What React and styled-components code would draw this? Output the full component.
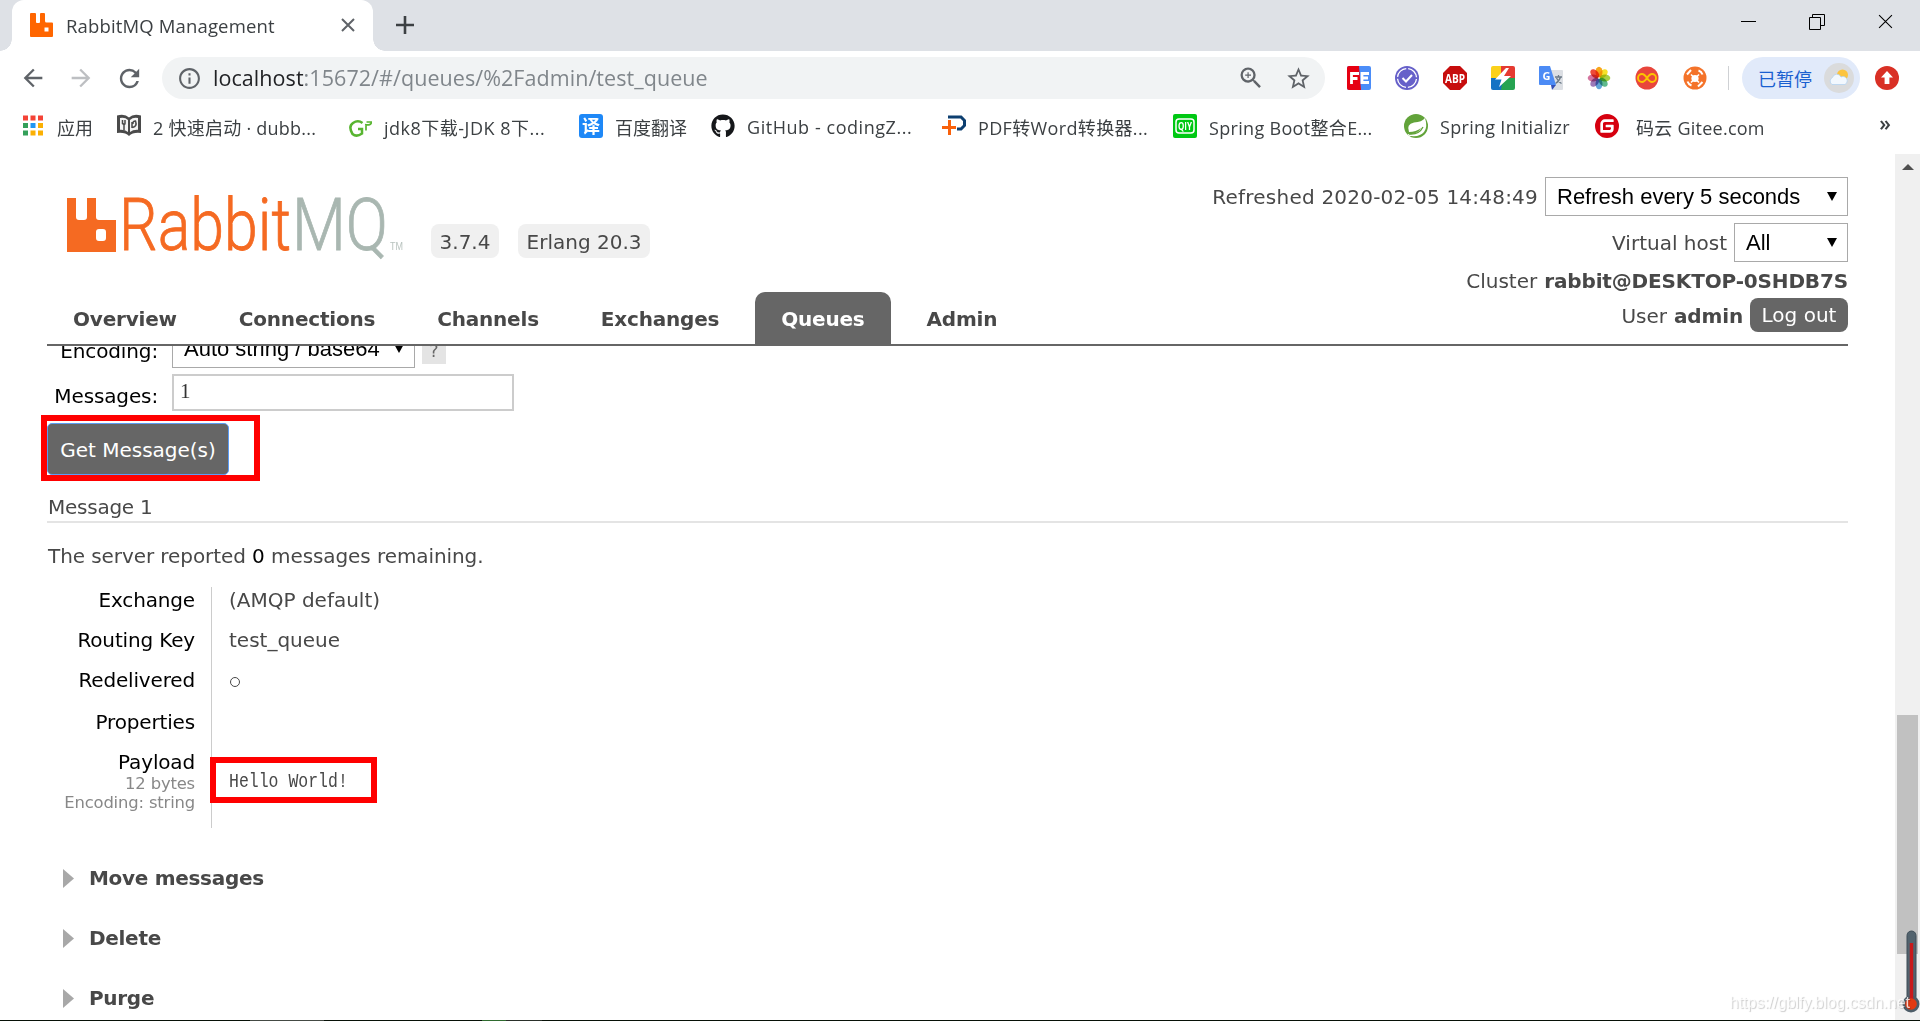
import styled, { createGlobalStyle } from 'styled-components'
import { MdArrowBack, MdArrowForward, MdRefresh, MdStarBorder, MdZoomIn, MdInfoOutline } from 'react-icons/md'
import { SiGitee } from 'react-icons/si'
import { FaGithub } from 'react-icons/fa'

const bookmarks = [
  { id: 'apps', text: '应用', width: 96, fit: 0 },
  { id: 'dubbo', text: '2 快速启动 · dubb...', width: 231, fit: 0.25 },
  { id: 'jdk', text: 'jdk8下载-JDK 8下...', width: 231, fit: 0.5 },
  { id: 'baidu', text: '百度翻译', width: 132, fit: 0 },
  { id: 'github', text: 'GitHub - codingZ...', width: 231, fit: 0.55 },
  { id: 'pdf', text: 'PDF转Word转换器...', width: 231, fit: 0.35 },
  { id: 'iqiyi', text: 'Spring Boot整合E...', width: 231, fit: 0.32 },
  { id: 'spring', text: 'Spring Initializr', width: 191, fit: 0.3 },
  { id: 'gitee', text: '码云 Gitee.com', width: 200, fit: 0.25, gap: 17 },
]

const extensions = ['fe', 'todo', 'abp', 'bolt', 'translate', 'flower', 'infinity', 'tool']

const tabs = ['Overview', 'Connections', 'Channels', 'Exchanges', 'Queues', 'Admin']

const sections = ['Move messages', 'Delete', 'Purge']

export default function App() {
  return (
    <Window>
      <GlobalStyle />
      <TabStrip>
        <BrowserTab>
          <RabbitIcon />
          <TabTitle>RabbitMQ Management</TabTitle>
          <Cross size={14} stroke="#5f6368" weight={2} />
        </BrowserTab>
        <NewTab viewBox="0 0 18 18">
          <path d="M9 0v18M0 9h18" stroke="#3c4043" strokeWidth="2.6" />
        </NewTab>
        <WindowControls>
          <svg width="15" height="22" viewBox="0 0 15 22">
            <path d="M0 10.5h15" stroke="#000" />
          </svg>
          <svg width="16" height="16" viewBox="0 0 16 16" fill="none" stroke="#000">
            <path d="M.5 3.5h11v12H.5zM3.500 3.500v-3h12v11h-4" />
          </svg>
          <Cross size={15} stroke="#000" weight={1} />
        </WindowControls>
      </TabStrip>
      <Toolbar>
        <NavIcons>
          <MdArrowBack size={28} />
          <MdArrowForward size={28} color="#bdbfc2" />
          <MdRefresh size={29} />
        </NavIcons>
        <AddressBar>
          <MdInfoOutline size={25} />
          <Url>
            <b>localhost</b>:15672/#/queues/%2Fadmin/test_queue
          </Url>
          <MdZoomIn size={28} />
          <MdStarBorder size={27} />
        </AddressBar>
        <Extensions>
          {extensions.map((id) => (
            <ExtensionIcon key={id} id={id} />
          ))}
        </Extensions>
        <Divider />
        <Profile>
          已暂停
          <Avatar />
        </Profile>
        <UpdateIcon viewBox="0 0 24 24">
          <circle cx="12" cy="12" r="12" fill="#d93025" />
          <path d="M12 5l6 6.500h-3.600V18H9.600v-6.500H6z" fill="#fff" />
        </UpdateIcon>
      </Toolbar>
      <BookmarkBar>
        {bookmarks.map((mark) => (
          <Bookmark key={mark.id} $width={mark.width} $gap={mark.gap} $fit={mark.fit}>
            <BookmarkIcon id={mark.id} />
            <span>{mark.text}</span>
          </Bookmark>
        ))}
        <More>»</More>
      </BookmarkBar>
      <Viewport>
        <Page>
          <Header>
            <Brand>
              <Logo />
              <Version $width={68}>3.7.4</Version>
              <Version $width={132}>Erlang 20.3</Version>
            </Brand>
            <Login>
              <LoginRow $height={39}>
                <Refreshed>Refreshed 2020-02-05 14:48:49</Refreshed>
                <Select $width={303}>
                  Refresh every 5 seconds <Caret />
                </Select>
              </LoginRow>
              <LoginRow $height={39}>
                Virtual host
                <Select $width={114}>
                  All <Caret />
                </Select>
              </LoginRow>
              <LoginRow $height={24}>
                Cluster <b>rabbit@DESKTOP-0SHDB7S</b>
              </LoginRow>
              <LoginRow $height={34}>
                User <b>admin</b>
                <LogOut>Log out</LogOut>
              </LoginRow>
            </Login>
          </Header>
          <Menu>
            {tabs.map((tab) => (
              <MenuItem key={tab} $selected={tab === 'Queues'}>
                {tab}
              </MenuItem>
            ))}
          </Menu>
          <Content>
            <FormRow $height={22}>
              <Label>Encoding:</Label>
              <Select $width={243}>
                Auto string / base64 <Caret />
              </Select>
              <Help>?</Help>
            </FormRow>
            <FormRow $height={37} $top={6}>
              <Label $shift={2}>Messages:</Label>
              <Input>1</Input>
            </FormRow>
            <ButtonRow>
              <GetButton>Get Message(s)</GetButton>
              <Mark $left={-6} $top={-8} $width={219} $height={66} />
            </ButtonRow>
            <MessageTitle>Message 1</MessageTitle>
            <Remaining>
              The server reported <em>0</em> messages remaining.
            </Remaining>
            <Facts>
              <FactName>Exchange</FactName>
              <FactValue>(AMQP default)</FactValue>
              <FactName>Routing Key</FactName>
              <FactValue>test_queue</FactValue>
              <FactName>Redelivered</FactName>
              <FactValue>
                <Ring />
              </FactValue>
              <FactName>Properties</FactName>
              <FactValue />
              <FactName>
                Payload
                <Detail>12 bytes</Detail>
                <Detail>Encoding: string</Detail>
              </FactName>
              <FactValue>
                <Payload>Hello World!</Payload>
                <Mark $left={-2} $top={8} $width={167} $height={46} />
              </FactValue>
            </Facts>
            {sections.map((section) => (
              <Section key={section}>
                <svg width="11" height="19" viewBox="0 0 11 19">
                  <path d="M0 0l11 9.500L0 19z" fill="#a8a8a8" />
                </svg>
                {section}
              </Section>
            ))}
          </Content>
        </Page>
        <Scrollbar>
          <ScrollUp />
          <Thumb />
        </Scrollbar>
      </Viewport>
      <Thermometer viewBox="0 0 18 84">
        <rect x="5" y="1" width="9" height="70" rx="4.500" fill="#52636e" stroke="#3e4d57" />
        <circle cx="9" cy="74" r="8.500" fill="#4d5d68" />
        <path d="M9.500 13v60" stroke="#c8191b" strokeWidth="3.400" />
        <circle cx="9" cy="74" r="5.800" fill="#e23a12" />
      </Thermometer>
      <Watermark>https://gblfy.blog.csdn.net</Watermark>
      <Taskbar />
    </Window>
  )
}

function Cross({ size, stroke, weight }) {
  return (
    <svg width={size} height={size} viewBox="0 0 14 14">
      <path d="M1 1l12 12M13 1L1 13" stroke={stroke} strokeWidth={weight} />
    </svg>
  )
}

function RabbitIcon() {
  return (
    <svg width="23" height="24" viewBox="0 0 23 24">
      <path
        fillRule="evenodd"
        fill="#ff6600"
        d="M1 0h4q1 0 1 1v8q0 1 1 1h2q1 0 1-1V1q0-1 1-1h3q1 0 1 1v7q0 1.500 1.500 1.500H22q1 0 1 1V23q0 1-1 1H1q-1 0-1-1V1q0-1 1-1zM14.500 14.500v4h4v-4z"
      />
    </svg>
  )
}

function Logo() {
  return (
    <LogoSvg viewBox="0 0 340 70">
      <path
        fillRule="evenodd"
        fill="#f56a22"
        d="M0 9h9v19q0 3 3 3h5q3 0 3-3V9h9v19q0 3 3 3h17v32H0zM32 40q-3 0-3 3v6q0 3 3 3h4q3 0 3-3v-6q0-3-3-3z"
      />
      <LogoText x="52" y="61" textLength="172" lengthAdjust="spacingAndGlyphs" $color="#f56a22">
        Rabbit
      </LogoText>
      <LogoText x="225" y="61" textLength="96" lengthAdjust="spacingAndGlyphs" $color="#a9b7b1">
        MQ
      </LogoText>
      <TradeMark x="323" y="61" textLength="13" lengthAdjust="spacingAndGlyphs">
        TM
      </TradeMark>
    </LogoSvg>
  )
}

function Avatar() {
  return (
    <svg width="30" height="30" viewBox="0 0 30 30">
      <circle cx="15" cy="15" r="15" fill="#dadbdc" />
      <circle cx="18.500" cy="12" r="5.500" fill="#fcc43e" />
      <path
        d="M8 21.500a4 4 0 0 1 .5-7 4.500 4.500 0 0 1 8.500-.5 4 4 0 0 1 4 7.500z"
        fill="#f2f8fe"
        stroke="#b5d3f0"
        strokeWidth=".8"
      />
    </svg>
  )
}

function ExtensionIcon({ id }) {
  return (
    <svg width="24" height="24" viewBox="0 0 24 24">
      {id === 'fe' && (
        <>
          <rect width="24" height="24" rx="2" fill="#4b8df8" />
          <path d="M2 0h10l2 24H2q-2 0-2-2V2q0-2 2-2z" fill="#e60012" />
          <path d="M4.500 18V7.500H12M4.500 12.500h6M22 7.500h-7v9h7M15 12h6" stroke="#fff" strokeWidth="2.800" fill="none" />
        </>
      )}
      {id === 'todo' && (
        <>
          <circle cx="12" cy="12" r="12" fill="#6660c9" />
          <circle cx="12" cy="12" r="9.500" fill="none" stroke="#fff" strokeWidth="1.300" strokeDasharray="12.900 2" strokeDashoffset="-1" />
          <path d="M7.500 12l3.500 3.500 6-6.500" fill="none" stroke="#fff" strokeWidth="2" />
        </>
      )}
      {id === 'abp' && (
        <>
          <path d="M7 0h10l7 7v10l-7 7H7l-7-7V7z" fill="#c70d0d" />
          <IconText x="12" y="16.500" textLength="20" lengthAdjust="spacingAndGlyphs" fontSize="12.500">
            ABP
          </IconText>
        </>
      )}
      {id === 'bolt' && (
        <>
          <path d="M2 0h10v12H0V2q0-2 2-2z" fill="#fbd11b" />
          <path d="M10 0h12q2 0 2 2v11H10z" fill="#e53a31" />
          <path d="M0 12h13v12H2q-2 0-2-2z" fill="#1473c4" />
          <path d="M12 12h12v10q0 2-2 2H10z" fill="#26a351" />
          <path d="M15 2L4 13.500h6.500L8 21l12-11h-7l5-8z" fill="#fff" />
        </>
      )}
      {id === 'translate' && (
        <>
          <path d="M11 4h12q1 0 1 1v18q0 1-1 1h-9z" fill="#dcdfe4" />
          <path d="M16 11h7M19.500 9v2M21.500 11q-1 4-5 6.500M17.500 12q1.500 3.500 5 5.500" stroke="#6b7a87" strokeWidth="1.300" fill="none" />
          <path d="M1 0h10l6 19H1q-1 0-1-1V1q0-1 1-1z" fill="#4c8bf5" />
          <path d="M12 19h5l-4 5z" fill="#3450b5" />
          <IconText x="7.500" y="14" fontSize="11">
            G
          </IconText>
        </>
      )}
      {id === 'flower' &&
        ['#f8a51b', '#f6e12a', '#a8cf45', '#5fb98d', '#62a5d8', '#9c7ab8', '#d4749f', '#ee4b3a'].map((color, i) => (
          <Petal key={color} cx="12" cy="6" rx="3.500" ry="5.300" fill={color} transform={`rotate(${i * 45} 12 12)`} />
        ))}
      {id === 'infinity' && (
        <>
          <circle cx="12" cy="12" r="11.500" fill="#e8453c" />
          <path
            d="M12 12c-2-3-3.500-4-5-4a4 4 0 0 0 0 8c1.500 0 3-1 5-4s3.500-4 5-4a4 4 0 0 1 0 8c-1.500 0-3-1-5-4z"
            fill="none"
            stroke="#fcc400"
            strokeWidth="1.900"
          />
        </>
      )}
      {id === 'tool' && (
        <>
          <circle cx="12" cy="12" r="11.500" fill="#f4732a" />
          <circle cx="12" cy="12.500" r="3.600" fill="#fff" />
          <path d="M8 8.500l8 8M16 8.500l-8 8" stroke="#fff" strokeWidth="1.600" />
          <path d="M4 8.500l4-4.500M15.500 4.500q3 1 4 4M4.500 15.500q1 3 4 4M15 20.500l4.500-4.500" stroke="#fff" strokeWidth="2" fill="none" />
        </>
      )}
    </svg>
  )
}

function BookmarkIcon({ id }) {
  if (id === 'github') return <FaGithub size={24} color="#15171a" />
  if (id === 'gitee') return <SiGitee size={24} color="#d6000f" />

  return (
    <svg width="24" height="24" viewBox="0 0 24 24">
      {id === 'apps' &&
        ['#f44336', '#f44336', '#f44336', '#34a05a', '#2196f3', '#fbb003', '#34a05a', '#fbb003', '#fbb003'].map(
          (color, i) => (
            <rect key={i} x={2 + (i % 3) * 7.500} y={1.5 + Math.floor(i / 3) * 7.500} width="5" height="5" fill={color} />
          ),
        )}
      {id === 'dubbo' && (
        <>
          <path d="M0 1.500q8-2 12 2 4-4 12-2V19q-8-1-12 3-4-4-12-3z" fill="#4a4a4a" />
          <path d="M3 4q5-1 8 2v12q-3-2.500-8-2.200zM21 4q-5-1-8 2v12q3-2.500 8-2.200z" fill="#f5f5f5" />
          <path d="M5.500 6v3.500q2.500 1.500 2.500 0V6M7 10v6M15 14V8M15.500 13.500q5-1 3-6.500-3 0-2.500 3" stroke="#4a4a4a" strokeWidth="1.500" fill="none" />
        </>
      )}
      {id === 'jdk' && (
        <>
          <path d="M14.500 9Q10 5.500 5 9T4.500 20q4 3.500 9.500-.5V15h-4" fill="none" stroke="#58b530" strokeWidth="2.500" />
          <path d="M18 11.500v5M17 10.500q6 1.500 6.500-2.500h-5" fill="none" stroke="#58b530" strokeWidth="1.700" />
        </>
      )}
      {id === 'baidu' && (
        <>
          <rect width="24" height="24" rx="3" fill="#1e88f7" />
          <IconText x="12" y="18.500" fontSize="18">
            译
          </IconText>
        </>
      )}
      {id === 'pdf' && (
        <>
          <path d="M6 3h13l3.500 3.500v5L19 15h-4" fill="none" stroke="#0d3f70" strokeWidth="3" />
          <path d="M7.500 6v15M0 13.500h14" stroke="#f9610b" strokeWidth="3" />
        </>
      )}
      {id === 'iqiyi' && (
        <>
          <rect width="24" height="24" rx="2" fill="#00c813" />
          <rect x="3" y="5" width="18" height="14" rx="3" fill="none" stroke="#fff" strokeWidth="1.500" />
          <IconText x="12" y="15.500" textLength="14" lengthAdjust="spacingAndGlyphs" fontSize="10">
            QIY
          </IconText>
        </>
      )}
      {id === 'spring' && (
        <>
          <circle cx="12" cy="12" r="12" fill="#62a33a" />
          <path d="M21 4q3 9-1 14-4 5-13 4-3 0-3-2 9 1 13-6-5 4-12 4Q2 10 10 8.500 18 8 21 4z" fill="#fff" />
          <path d="M5 20q10 1 14-7" fill="none" stroke="#62a33a" strokeWidth="1.300" />
        </>
      )}
    </svg>
  )
}

const GlobalStyle = createGlobalStyle`
  * {
    box-sizing: border-box;
  }

  body {
    margin: 0;
    background: #fff;
    overflow: hidden;
  }

  svg {
    flex-shrink: 0;
    display: block;
  }
`

const Window = styled.div`
  position: relative;
  width: 1920px;
  height: 1021px;
  display: flex;
  flex-direction: column;
  overflow: hidden;
  white-space: nowrap;
  font-family: 'Open Sans', 'Noto Sans CJK SC', sans-serif;
  color: #3c4043;
`

const TabStrip = styled.div`
  height: 51px;
  display: flex;
  background: #dee1e6;
  padding-left: 12px;
`

const BrowserTab = styled.div`
  position: relative;
  width: 361px;
  display: flex;
  align-items: center;
  padding: 0 18px 1px 18px;
  background: #fff;
  border-radius: 12px 12px 0 0;

  &::before,
  &::after {
    content: '';
    position: absolute;
    bottom: 0;
    width: 12px;
    height: 12px;
    background: radial-gradient(circle at 0 0, #dee1e6 11.5px, #fff 12px);
  }

  &::before {
    left: -12px;
  }

  &::after {
    right: -12px;
    transform: scaleX(-1);
  }
`

const TabTitle = styled.span`
  flex: 1;
  margin-left: 13px;
  padding-top: 1px;
  font-size: 18.500px;
  letter-spacing: 0.15px;
`

const NewTab = styled.svg`
  width: 18px;
  height: 18px;
  margin: 16px 0 0 23px;
`

const WindowControls = styled.div`
  margin-left: auto;
  padding: 0 27px 8px 0;
  display: flex;
  align-items: center;
  gap: 53px;
`

const Toolbar = styled.div`
  height: 54px;
  display: flex;
  align-items: center;
  padding: 0 21px 0 19px;
`

const NavIcons = styled.div`
  width: 143px;
  display: flex;
  gap: 20px;
  color: #5f6368;
`

const AddressBar = styled.div`
  width: 1163px;
  height: 42px;
  display: flex;
  align-items: center;
  padding: 0 13px 0 15px;
  border-radius: 21px;
  background: #f1f3f4;
  color: #5f6368;
  gap: 20px;
`

const Url = styled.span`
  flex: 1;
  margin-left: -9px;
  padding-bottom: 1px;
  font-size: 21.500px;
  letter-spacing: 0.06px;
  color: #80868b;

  b {
    font-weight: 400;
    color: #202124;
  }
`

const Extensions = styled.div`
  display: flex;
  gap: 24px;
  margin-left: 22px;
`

const Petal = styled.ellipse`
  mix-blend-mode: multiply;
`

const IconText = styled.text`
  font-family: 'Open Sans', 'Noto Sans CJK SC', sans-serif;
  font-weight: 700;
  text-anchor: middle;
  letter-spacing: 0;
  fill: #fff;
`

const Divider = styled.div`
  width: 1px;
  height: 24px;
  margin: 0 13px 0 21px;
  background: #cfd1d4;
`

const Profile = styled.div`
  width: 118px;
  height: 42px;
  display: flex;
  align-items: center;
  justify-content: space-between;
  padding: 0 6px 1px 16px;
  border-radius: 21px;
  background: #e1eafa;
  color: #1a5fd0;
  font-size: 18px;
`

const UpdateIcon = styled.svg`
  width: 24px;
  height: 24px;
  margin-left: 15px;
`

const BookmarkBar = styled.div`
  height: 49px;
  display: flex;
  padding: 9px 0 0 21px;
`

const Bookmark = styled.div`
  width: ${({ $width }) => $width}px;
  height: 24px;
  display: flex;
  align-items: center;
  gap: ${({ $gap }) => $gap || 12}px;
  font-size: 18px;
  letter-spacing: ${({ $fit }) => $fit}px;

  span {
    padding-top: 1px;
  }
`

const More = styled.span`
  margin: -4px 29px 0 auto;
  font-size: 21px;
  font-weight: 600;
  line-height: 26px;
`

const Viewport = styled.div`
  flex: 1;
  min-height: 0;
  display: flex;
`

const Page = styled.div`
  width: 1895px;
  padding: 0 47px;
  font-family: 'DejaVu Sans', Verdana, sans-serif;
  font-size: 20px;
  color: #484848;

  b {
    letter-spacing: -0.15px;
  }
`

const Header = styled.div`
  height: 138px;
  display: flex;
  justify-content: space-between;
`

const Brand = styled.div`
  display: flex;
  padding: 35px 0 0 20px;
`

const LogoSvg = styled.svg`
  width: 340px;
  height: 70px;
  margin-right: 24px;
  overflow: visible;
`

const LogoText = styled.text`
  font-family: Roboto, sans-serif;
  font-size: 72px;
  font-weight: 300;
  fill: ${({ $color }) => $color};
  stroke: ${({ $color }) => $color};
  stroke-width: 0.8px;
`

const TradeMark = styled.text`
  font-family: 'Liberation Sans', sans-serif;
  font-size: 11px;
  fill: #b9c3bf;
`

const Version = styled.div`
  width: ${({ $width }) => $width}px;
  height: 34px;
  margin: 35px 19px 0 0;
  border-radius: 8px;
  background: #f0f0f0;
  text-align: center;
  line-height: 36px;
`

const Login = styled.div`
  display: flex;
  flex-direction: column;
  align-items: flex-end;
  padding-top: 23px;
`

const LoginRow = styled.div`
  height: ${({ $height }) => $height}px;
  display: flex;
  align-items: center;
  gap: 7px;
  margin-bottom: 7px;
`

const Refreshed = styled.span`
  letter-spacing: 0.22px;
`

const Select = styled.div`
  width: ${({ $width }) => $width}px;
  height: 39px;
  display: flex;
  align-items: center;
  justify-content: space-between;
  padding: 0 10px 0 11px;
  border: 1px solid #a9a9a9;
  background: #fff;
  color: #000;
  font-family: 'Liberation Sans', Arial, sans-serif;
  font-size: 22px;
`

const Caret = styled.i`
  border: 5px solid transparent;
  border-top: 9px solid #000;
  border-bottom: 0;
`

const LogOut = styled.div`
  width: 98px;
  height: 34px;
  margin-top: -2px;
  border-radius: 8px;
  background: #666;
  color: #fff;
  text-align: center;
  line-height: 35px;
`

const Menu = styled.div`
  position: relative;
  height: 54px;
  display: flex;
  gap: 10px;
  border-bottom: 2px solid #666;
`

const MenuItem = styled.div`
  height: 53px;
  padding: 0 26px;
  border-radius: 10px 10px 0 0;
  background: ${({ $selected }) => ($selected ? '#666' : 'transparent')};
  color: ${({ $selected }) => ($selected ? '#fff' : '#484848')};
  font-weight: 700;
  letter-spacing: -0.2px;
  line-height: 54px;
`

const Content = styled.div`
  height: 674px;
  overflow: hidden;
  margin-left: -6px;
  padding-left: 6px;
`

const FormRow = styled.div`
  height: ${({ $height }) => $height}px;
  margin-top: ${({ $top }) => $top || 0}px;
  display: flex;
  align-items: flex-end;
`

const Label = styled.div`
  width: 125px;
  height: 37px;
  padding-right: 14px;
  margin-bottom: ${({ $shift }) => -($shift || 0)}px;
  text-align: right;
  letter-spacing: -0.13px;
  line-height: 40px;
  color: #000;
`

const Help = styled.div`
  width: 24px;
  height: 24px;
  margin: 0 0 4px 7px;
  background: #e4e4e4;
  color: #666;
  font-size: 17px;
  line-height: 22px;
  text-align: center;
`

const Input = styled.div`
  width: 342px;
  height: 37px;
  padding: 0 6px;
  border: 2px solid #ccc;
  color: #333;
  font-family: 'Liberation Serif', serif;
  font-size: 21px;
  line-height: 31px;
`

const ButtonRow = styled.div`
  position: relative;
  height: 52px;
  margin-top: 12px;
`

const GetButton = styled.div`
  width: 182px;
  height: 52px;
  border: 1px solid #5c9cf5;
  border-radius: 5px;
  background: #666;
  color: #fff;
  text-align: center;
  line-height: 52px;
`

// red frames drawn over the page to point something out
const Mark = styled.div`
  position: absolute;
  left: ${({ $left }) => $left}px;
  top: ${({ $top }) => $top}px;
  width: ${({ $width }) => $width}px;
  height: ${({ $height }) => $height}px;
  border: 6px solid #f00;
`

const MessageTitle = styled.div`
  height: 30px;
  margin-top: 18px;
  padding-left: 1px;
  border-bottom: 2px solid #e4e4e4;
  letter-spacing: -0.25px;
  line-height: 28px;
`

const Remaining = styled.div`
  margin-top: 20px;
  height: 44px;
  padding-left: 1px;
  letter-spacing: -0.08px;
  line-height: 26px;

  em {
    font-style: normal;
    color: #000;
  }
`

const Facts = styled.div`
  display: grid;
  grid-template-columns: 165px 1fr;
  grid-template-rows: 40px 40px 42px 40px 79px;
  margin-bottom: 31px;
`

const FactName = styled.div`
  padding-right: 16px;
  border-right: 1px solid #ccc;
  color: #000;
  text-align: right;
  letter-spacing: -0.16px;
  line-height: 26px;
`

const Detail = styled.div`
  position: relative;
  top: -1px;
  color: #888;
  font-size: 16.400px;
  line-height: 19px;
`

const FactValue = styled.div`
  position: relative;
  padding-left: 17px;
  line-height: 26px;
`

const Ring = styled.div`
  width: 10px;
  height: 10px;
  margin: 10px 0 0 1px;
  border: 1px solid #484848;
  border-radius: 50%;
`

const Payload = styled.div`
  padding-top: 20px;
  font-family: 'Liberation Mono', monospace;
  font-size: 16.500px;
  transform: scaleY(1.2);
  transform-origin: 0 32px;
`

const Section = styled.div`
  height: 60px;
  display: flex;
  align-items: center;
  padding: 0 0 22px 16px;
  gap: 15px;
  font-weight: 700;
  letter-spacing: -0.3px;
`

const Scrollbar = styled.div`
  width: 25px;
  background: #f0f0f0;
`

const ScrollUp = styled.div`
  width: 12px;
  margin: 10px 0 0 7px;
  border: 6px solid transparent;
  border-top: 0;
  border-bottom-color: #505050;
`

const Thumb = styled.div`
  width: 21px;
  height: 239px;
  margin: 545px 0 0 2px;
  background: #c1c1c1;
`

const Watermark = styled.div`
  position: absolute;
  right: 10px;
  bottom: 9px;
  font-family: 'Liberation Sans', Arial, sans-serif;
  font-size: 16px;
  color: rgba(255, 255, 255, 0.8);
  text-shadow: 1px 1px 1px rgba(0, 0, 0, 0.2);
`

const Thermometer = styled.svg`
  position: absolute;
  left: 1902px;
  top: 930px;
  width: 18px;
  height: 84px;
`

const Taskbar = styled.div`
  position: absolute;
  left: 0;
  right: 0;
  bottom: 0;
  height: 1px;
  background: linear-gradient(
    to right,
    #071107 250px,
    #444a44 250px 324px,
    #071107 324px 482px,
    #2f6b2f 482px 506px,
    #2a302a 506px 542px,
    #071107 542px
  );
`
